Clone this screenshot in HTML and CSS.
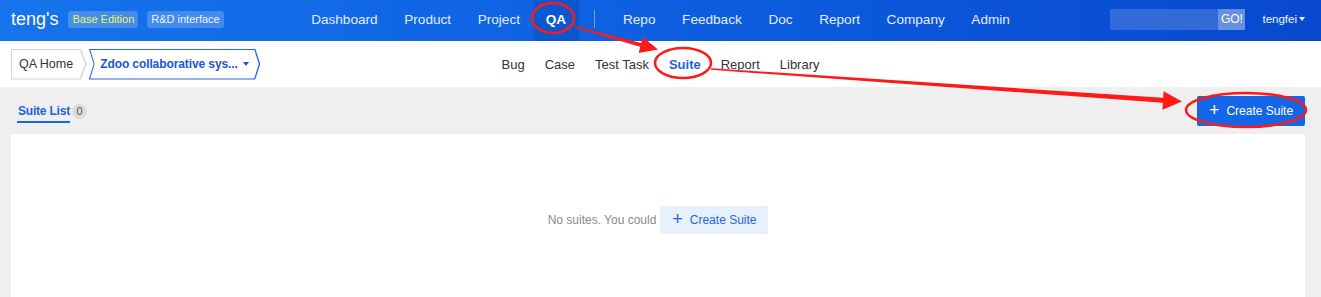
FILE: index.html
```html
<!DOCTYPE html>
<html lang="en">
<head>
  <meta charset="UTF-8" />
  <title>Suite - QA</title>
  <link rel="stylesheet" href="styles.css">
</head>
<body>
  <header class="topbar">
    <div class="brand">
      <span class="logo">teng's</span>
      <span class="badge badge-edition">Base Edition</span>
      <span class="badge">R&amp;D interface</span>
    </div>
    <nav class="mainnav">
      <a>Dashboard</a>
      <a>Product</a>
      <a>Project</a>
      <a class="active">QA</a>
      <span class="divider"></span>
      <a>Repo</a>
      <a>Feedback</a>
      <a>Doc</a>
      <a>Report</a>
      <a>Company</a>
      <a>Admin</a>
    </nav>
    <div class="tools">
      <div class="search">
        <span class="search-input"></span>
        <span class="search-go">GO!</span>
      </div>
      <span class="user">tengfei <span class="caret"></span></span>
    </div>
  </header>

  <div class="subbar">
    <div class="crumbs">
      <div class="crumb"><span>QA Home</span></div>
      <div class="crumb crumb-product"><span>Zdoo collaborative sys... <i class="caret"></i></span></div>
    </div>
    <nav class="subnav">
      <a>Bug</a>
      <a>Case</a>
      <a>Test Task</a>
      <a class="active">Suite</a>
      <a>Report</a>
      <a>Library</a>
    </nav>
    <div></div>
  </div>

  <main class="content">
    <div class="toolbar">
      <div class="tab">
        <span class="tab-label">Suite List</span>
        <span class="count">0</span>
      </div>
      <button class="btn-primary"><span class="plus">+</span>Create Suite</button>
    </div>
    <div class="panel">
      <div class="empty">
        <span>No suites. You could</span>
        <button class="btn-light"><span class="plus">+</span>Create Suite</button>
      </div>
    </div>
  </main>

  <!-- red marks drawn over the screenshot -->
  <svg class="marks" width="1321" height="297" viewBox="0 0 1321 297">
    <g fill="none" stroke="#ff1a1a" stroke-width="2.5">
      <ellipse cx="553" cy="18" rx="21" ry="15" />
      <ellipse cx="683" cy="63" rx="28" ry="15" />
      <ellipse cx="1246" cy="110" rx="60" ry="17" />
    </g>
    <g fill="#ff1a1a">
      <polygon points="575.2,26.2 641.1,43 642.8,37 658,49.5 638.8,53 640.1,46.8 574.8,27.8" />
      <polygon points="711.1,68.2 1163.2,97.8 1163.6,91.3 1182,101.5 1162.4,109.8 1162.8,102.8 710.9,69.8" />
    </g>
  </svg>
</body>
</html>
```

FILE: styles.css
```css
* { margin: 0; padding: 0; box-sizing: border-box; }
html, body {
  height: 100%;
  font-family: 'Liberation Sans', Arial, sans-serif;
  background: #efefef;
  color: #333;
  overflow: hidden;
}
body { position: relative; }
a { cursor: pointer; }
button { font-family: inherit; border: none; cursor: pointer; }

/* --- top bar --- */
.topbar {
  height: 41px;
  display: grid;
  grid-template-columns: 1fr auto 1fr;
  align-items: stretch;
  background: linear-gradient(90deg, #1674ec 0%, #0d5fe0 50%, #0848cd 100%);
  color: #fff;
}
.brand {
  display: flex;
  align-items: center;
  padding: 0 0 3px 11px;
  gap: 9px;
}
.logo { font-size: 18px; margin-right: 1px; }
.badge {
  font-size: 11px;
  line-height: 17px;
  padding: 0 4px;
  border-radius: 3px;
  background: rgba(255, 255, 255, 0.2);
  color: #eef3ff;
}
.badge-edition { color: #f4f53e; }

.mainnav {
  display: flex;
  align-items: stretch;
}
.mainnav a {
  display: flex;
  align-items: center;
  padding: 0 13.3px 3px;
  font-size: 13.6px;
  color: #e3ecff;
}
.mainnav a.active {
  background: rgba(0, 20, 90, 0.14);
  font-weight: bold;
  color: #fff;
  padding: 0 12.5px 3px;
}
.divider {
  width: 1px;
  margin: 10px 15px 13px;
  background: rgba(255, 255, 255, 0.4);
}

.tools {
  display: flex;
  align-items: center;
  justify-content: flex-end;
  padding: 0 16px 3px 0;
  gap: 17px;
}
.search { display: flex; height: 21px; }
.search-input {
  width: 108px;
  background: rgba(255, 255, 255, 0.17);
}
.search-go {
  width: 27px;
  font-size: 12px;
  line-height: 21px;
  text-align: center;
  background: rgba(255, 255, 255, 0.38);
  color: #fff;
}
.user { font-size: 11.5px; color: #f0f4ff; display: flex; align-items: center; gap: 2px; }
.caret {
  display: inline-block;
  width: 0; height: 0;
  border-left: 3.5px solid transparent;
  border-right: 3.5px solid transparent;
  border-top: 4px solid currentColor;
}

/* --- sub bar --- */
.subbar {
  height: 46px;
  background: #fff;
  display: grid;
  grid-template-columns: 1fr auto 1fr;
  align-items: center;
}
.crumbs {
  display: flex;
  padding-left: 11px;
  gap: 2px;
}
.crumb {
  height: 31px;
  padding: 1px 1.5px 1px 1px;
  background: #d4d4d4;
  clip-path: polygon(0 0, calc(100% - 6px) 0, 100% 50%, calc(100% - 6px) 100%, 0 100%);
  display: flex;
}
.crumb span {
  display: flex;
  align-items: center;
  gap: 7px;
  background: #fff;
  font-size: 12.5px;
  color: #333;
  padding: 0 12px 0 7px;
  clip-path: polygon(0 0, calc(100% - 5.5px) 0, 100% 50%, calc(100% - 5.5px) 100%, 0 100%);
}
.crumb-product {
  background: #2b66dd;
  padding-left: 1.5px;
  clip-path: polygon(0 0, calc(100% - 5px) 0, 100% 50%, calc(100% - 5px) 100%, 0 100%, 5px 50%);
}
.crumb-product span {
  color: #1b55d4;
  font-weight: bold;
  font-size: 12px;
  gap: 5px;
  padding: 0 10px 0 10px;
  letter-spacing: -0.1px;
  clip-path: polygon(0 0, calc(100% - 4.5px) 0, 100% 50%, calc(100% - 4.5px) 100%, 0 100%, 4.5px 50%);
}
.crumb-product .caret { color: #1b55d4; }

.subnav { display: flex; }
.subnav a {
  font-size: 13px;
  padding: 0 10px;
  color: #333;
}
.subnav a.active { color: #1f5fe0; font-weight: bold; }

/* --- content --- */
.content { padding: 0 16px 0 11px; }
.toolbar {
  height: 46px;
  display: flex;
  align-items: center;
  justify-content: space-between;
}
.tab {
  display: flex;
  align-items: center;
  gap: 2px;
  padding-left: 6px;
  margin-top: 2px;
}
.tab-label {
  font-size: 12px;
  font-weight: bold;
  color: #1f61e0;
  padding: 0 0 3px 1px;
  border-bottom: 2px solid #1667e8;
  margin-top: 5px;
  letter-spacing: -0.2px;
}
.count {
  width: 15px;
  height: 15px;
  border-radius: 50%;
  background: #dcdcdc;
  font-size: 11px;
  line-height: 15px;
  text-align: center;
  color: #555;
}
.btn-primary {
  height: 30px;
  width: 108px;
  border-radius: 2px;
  background: #1466e8;
  color: #fff;
  font-size: 12px;
  display: flex;
  align-items: center;
  justify-content: center;
  gap: 7px;
  margin-top: 1px;
}
.plus { font-size: 18px; line-height: 1; font-weight: normal; margin-top: -2px; }

.panel {
  background: #fff;
  height: 200px;
  margin-top: 1px;
  padding-top: 72px;
}
.empty {
  display: flex;
  align-items: center;
  justify-content: center;
  gap: 4px;
  font-size: 12px;
  color: #8a8a8a;
}
.btn-light {
  height: 28px;
  width: 108px;
  border-radius: 2px;
  background: #e7f0fd;
  color: #2466db;
  font-size: 12px;
  display: flex;
  align-items: center;
  justify-content: center;
  gap: 7px;
}

.marks {
  position: absolute;
  top: 0;
  left: 0;
  pointer-events: none;
  z-index: 10;
}
```
